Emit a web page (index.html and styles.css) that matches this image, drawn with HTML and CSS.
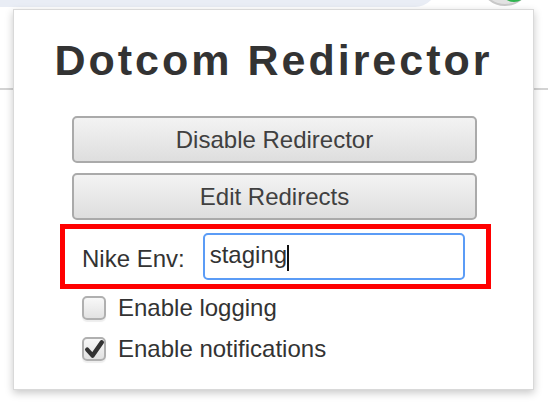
FILE: index.html
```html
<!DOCTYPE html>
<html lang="en">
<head>
<meta charset="utf-8">
<title>Dotcom Redirector</title>
<link rel="stylesheet" href="styles.css">
</head>
<body>
  <div class="browser">
    <div class="omnibox"></div>
    <div class="avatar"><div class="avatar-dot"></div></div>
    <div class="toolbar-line"></div>

    <div class="popup">
      <h1 class="title">Dotcom Redirector</h1>
      <div class="content">
        <button class="btn" type="button">Disable Redirector</button>
        <button class="btn" type="button">Edit Redirects</button>

        <div class="highlight">
          <span class="env-label">Nike Env:</span>
          <div class="field"><span class="field-text">staging</span><span class="caret"></span></div>
        </div>

        <div class="check-row">
          <span class="checkbox"></span>
          <span class="check-label">Enable logging</span>
        </div>
        <div class="check-row">
          <span class="checkbox">
            <svg class="tick" viewBox="0 0 24 24" width="24" height="24"><path d="M5.2 12.6 L10.6 18.6 L19.8 5.2" fill="none" stroke="#333" stroke-width="4.4" stroke-linejoin="round" stroke-linecap="round"/></svg>
          </span>
          <span class="check-label">Enable notifications</span>
        </div>
      </div>
    </div>
  </div>
</body>
</html>
```
FILE: styles.css
```css
* { box-sizing: border-box; }

html, body {
  margin: 0;
  padding: 0;
  background: #ffffff;
}

.browser {
  position: relative;
  width: 548px;
  height: 408px;
  overflow: hidden;
  background: #ffffff;
  font-family: "Liberation Sans", Arial, Helvetica, sans-serif;
}

.omnibox {
  position: absolute;
  left: -20px;
  top: -40px;
  width: 457px;
  height: 47px;
  background: #e9edf5;
  border-bottom-right-radius: 22px;
}

.avatar {
  position: absolute;
  left: 479px;
  top: -46px;
  width: 52px;
  height: 52px;
  border-radius: 50%;
  background: #e2e2e2;
  border: 2px solid #c9c9c9;
}

.avatar-dot {
  position: absolute;
  left: 19px;
  top: 18px;
  width: 28px;
  height: 28px;
  border-radius: 50%;
  background: #2fb44f;
}

.toolbar-line {
  position: absolute;
  left: 0;
  right: 0;
  top: 88px;
  height: 2px;
  background: #d3d3d3;
}

.popup {
  position: absolute;
  left: 13px;
  top: 9px;
  width: 521px;
  background: #ffffff;
  border: 1px solid #d9d9d9;
  box-shadow: 0 3px 8px rgba(0, 0, 0, 0.22);
  padding: 25px 0 28px;
}

.title {
  margin: 0;
  font-size: 43px;
  line-height: 50px;
  font-weight: 700;
  letter-spacing: 3px;
  color: #333333;
  text-align: center;
}

.content {
  display: flex;
  flex-direction: column;
  padding: 0 56px 0 58px;
  margin-top: 31px;
}

.btn {
  display: block;
  width: 100%;
  height: 47px;
  margin: 0 0 10px;
  padding: 0;
  border: 2px solid #aaaaaa;
  border-radius: 5px;
  background: linear-gradient(#f3f3f3, #dedede);
  font-family: "Liberation Sans", Arial, Helvetica, sans-serif;
  font-size: 24px;
  line-height: 43px;
  color: #404040;
  text-align: center;
}

.highlight {
  display: flex;
  align-items: center;
  gap: 18px;
  margin: -6px -14px 0 -12px;
  border: 5px solid #ff0000;
  padding: 4px 21px 4px 17px;
}

.env-label {
  font-size: 24px;
  line-height: 27px;
  color: #333333;
  padding-top: 3px;
  white-space: nowrap;
}

.field {
  flex: 1;
  height: 47px;
  display: flex;
  align-items: center;
  border: 2px solid #5b9cf6;
  border-radius: 5px;
  padding: 0 0 3px 5px;
  font-size: 24px;
  color: #333333;
}

.caret {
  display: inline-block;
  width: 1.5px;
  height: 26px;
  margin-top: 5px;
  background: #111111;
}

.check-row {
  display: flex;
  align-items: center;
  gap: 12px;
  padding-left: 10px;
  height: 24px;
  margin-top: 7px;
}

.check-row + .check-row {
  margin-top: 17px;
}

.checkbox {
  position: relative;
  flex: none;
  width: 24px;
  height: 24px;
  border: 2px solid #b0b0b0;
  border-radius: 5px;
  background: linear-gradient(#f8f8f8, #e2e2e2);
  box-shadow: 0 2px 1px rgba(0, 0, 0, 0.07);
}

.tick {
  position: absolute;
  left: -2px;
  top: -2px;
}

.check-label {
  font-size: 24px;
  line-height: 24px;
  color: #333333;
  white-space: nowrap;
}
```
